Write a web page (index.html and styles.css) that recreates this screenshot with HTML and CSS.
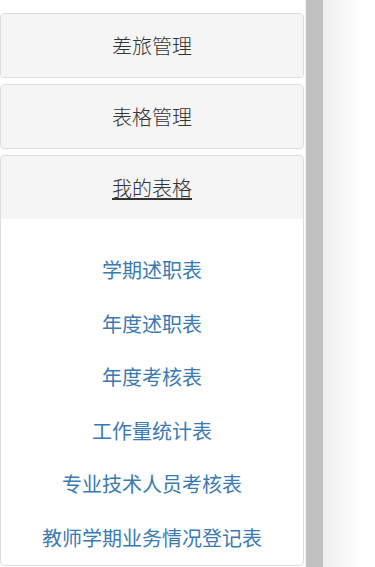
FILE: index.html
```html
<!DOCTYPE html>
<html lang="zh-CN">

<head>
    <meta name="viewport" content="width=device-width, initial-scale=1">
    <meta charset="utf-8">

    <title>我的表格</title>

    <link rel="stylesheet" href="styles.css">
</head>

<body>
    <div class="layout">
        <!-- Sidebar accordion -->
        <div class="sidebar">
            <div class="panel-group">
                <div class="panel">
                    <div class="panel-heading"><a href="#">差旅管理</a></div>
                </div>
                <div class="panel">
                    <div class="panel-heading"><a href="#">表格管理</a></div>
                </div>
                <div class="panel">
                    <div class="panel-heading"><a href="#" class="active">我的表格</a></div>
                    <div class="panel-body">
                        <ul class="menu">
                            <li><a href="#">学期述职表</a></li>
                            <li><a href="#">年度述职表</a></li>
                            <li><a href="#">年度考核表</a></li>
                            <li><a href="#">工作量统计表</a></li>
                            <li><a href="#">专业技术人员考核表</a></li>
                            <li><a href="#">教师学期业务情况登记表</a></li>
                        </ul>
                    </div>
                </div>
            </div>
        </div>

        <div class="splitter"></div>

        <div class="content"></div>
    </div>
</body>

</html>
```

FILE: styles.css
```css
* {
    margin: 0;
    padding: 0;
    box-sizing: border-box;
}

html,
body {
    height: 100%;
    overflow: hidden;
    background: #fff;
    font-family: "Noto Sans CJK SC", "Microsoft YaHei", sans-serif;
}

.layout {
    display: flex;
    height: 100%;
}

/* Sidebar */
.sidebar {
    width: 306px;
    flex-shrink: 0;
    padding-top: 13px;
    border-right: 1px solid #f0f0f0;
}

.panel-group {
    width: 304px;
}

.panel {
    border: 1px solid #dddddd;
    border-radius: 4px;
    background: #fff;
    overflow: hidden;
}

.panel + .panel {
    margin-top: 6px;
}

.panel-heading {
    background: #f5f5f5;
    padding: 20px 15px;
    text-align: center;
    font-size: 20px;
    line-height: 23px;
}

.panel-heading a {
    color: #333;
    font-weight: 300;
    text-decoration: none;
}

.panel-heading a.active {
    text-decoration: underline;
    text-underline-offset: 2px;
}

.panel-body {
    padding-top: 24px;
}

.menu {
    list-style: none;
}

.menu li {
    text-align: center;
    font-size: 20px;
    line-height: 53.6px;
}

.menu a {
    color: #3a7ab2;
    text-decoration: none;
}

/* Splitter bar */
.splitter {
    width: 17px;
    flex-shrink: 0;
    background: #c1c1c1;
}

.content {
    flex: 1;
    background: linear-gradient(to right, #eeeeee 0%, #ffffff 75%);
}
```
